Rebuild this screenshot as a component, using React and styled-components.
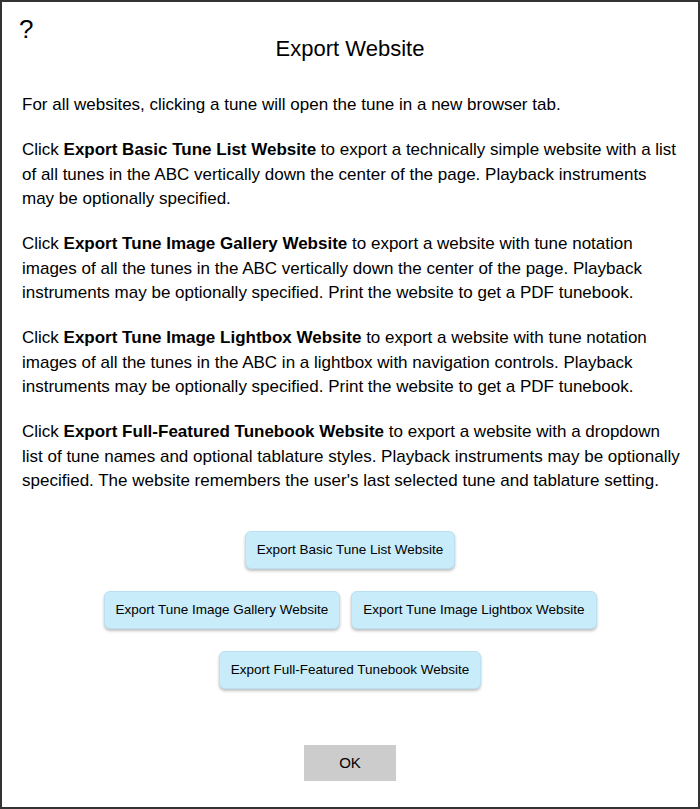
import React from "react";
import styled, { createGlobalStyle } from "styled-components";

const Global = createGlobalStyle`
  html, body { margin: 0; padding: 0; background: #fff; }
  body { font-family: "Liberation Sans", Arial, Helvetica, sans-serif; color: #000; }
`;

const Dialog = styled.div`
  box-sizing: border-box;
  width: 700px;
  height: 809px;
  border: 2px solid #333;
  background: #fff;
  position: relative;
  padding: 0 20px;
  display: flex;
  flex-direction: column;
`;

const Help = styled.div`
  position: absolute;
  left: 17px;
  top: 14px;
  font-size: 26px;
  line-height: 1;
`;

const Title = styled.h1`
  margin: 34px 0 0;
  text-align: center;
  font-size: 22px;
  font-weight: normal;
  line-height: 26px;
`;

const Body = styled.div`
  margin: 31px -4px 0 0;
  display: flex;
  flex-direction: column;
  gap: 20.5px;
`;

const Para = styled.p`
  margin: 0;
  font-size: 17px;
  line-height: 24.5px;
`;

const ButtonArea = styled.div`
  margin-top: 37px;
  display: flex;
  flex-direction: column;
  align-items: center;
  gap: 22px;
`;

const ButtonRow = styled.div`
  display: flex;
  gap: 11px;
  justify-content: center;
`;

const ExportButton = styled.button`
  font-family: inherit;
  font-size: 13.5px;
  color: #000;
  background: #c8ecfa;
  border: 1px solid #b9e1f1;
  border-radius: 6px;
  height: 38px;
  padding: 0 11px;
  box-shadow: 0 2px 3px rgba(0, 0, 0, 0.25);
  cursor: pointer;
`;

const OkRow = styled.div`
  margin-top: 56px;
  display: flex;
  justify-content: center;
`;

const OkButton = styled.button`
  font-family: inherit;
  font-size: 15px;
  color: #000;
  background: #cccccc;
  border: none;
  width: 92px;
  height: 36px;
  cursor: pointer;
`;

export default function App() {
  return (
    <>
      <Global />
      <Dialog>
        <Help>?</Help>
        <Title>Export Website</Title>
        <Body>
          <Para>For all websites, clicking a tune will open the tune in a new browser tab.</Para>
          <Para>
            Click <b>Export Basic Tune List Website</b> to export a technically simple website with a list of all tunes in the ABC vertically down the center of the page. Playback instruments may be optionally specified.
          </Para>
          <Para>
            Click <b>Export Tune Image Gallery Website</b> to export a website with tune notation images of all the tunes in the ABC vertically down the center of the page. Playback instruments may be optionally specified. Print the website to get a PDF tunebook.
          </Para>
          <Para>
            Click <b>Export Tune Image Lightbox Website</b> to export a website with tune notation images of all the tunes in the ABC in a lightbox with navigation controls. Playback instruments may be optionally specified. Print the website to get a PDF tunebook.
          </Para>
          <Para>
            Click <b>Export Full-Featured Tunebook Website</b> to export a website with a dropdown list of tune names and optional tablature styles. Playback instruments may be optionally specified. The website remembers the user's last selected tune and tablature setting.
          </Para>
        </Body>
        <ButtonArea>
          <ButtonRow>
            <ExportButton>Export Basic Tune List Website</ExportButton>
          </ButtonRow>
          <ButtonRow>
            <ExportButton>Export Tune Image Gallery Website</ExportButton>
            <ExportButton>Export Tune Image Lightbox Website</ExportButton>
          </ButtonRow>
          <ButtonRow>
            <ExportButton>Export Full-Featured Tunebook Website</ExportButton>
          </ButtonRow>
        </ButtonArea>
        <OkRow>
          <OkButton>OK</OkButton>
        </OkRow>
      </Dialog>
    </>
  );
}
